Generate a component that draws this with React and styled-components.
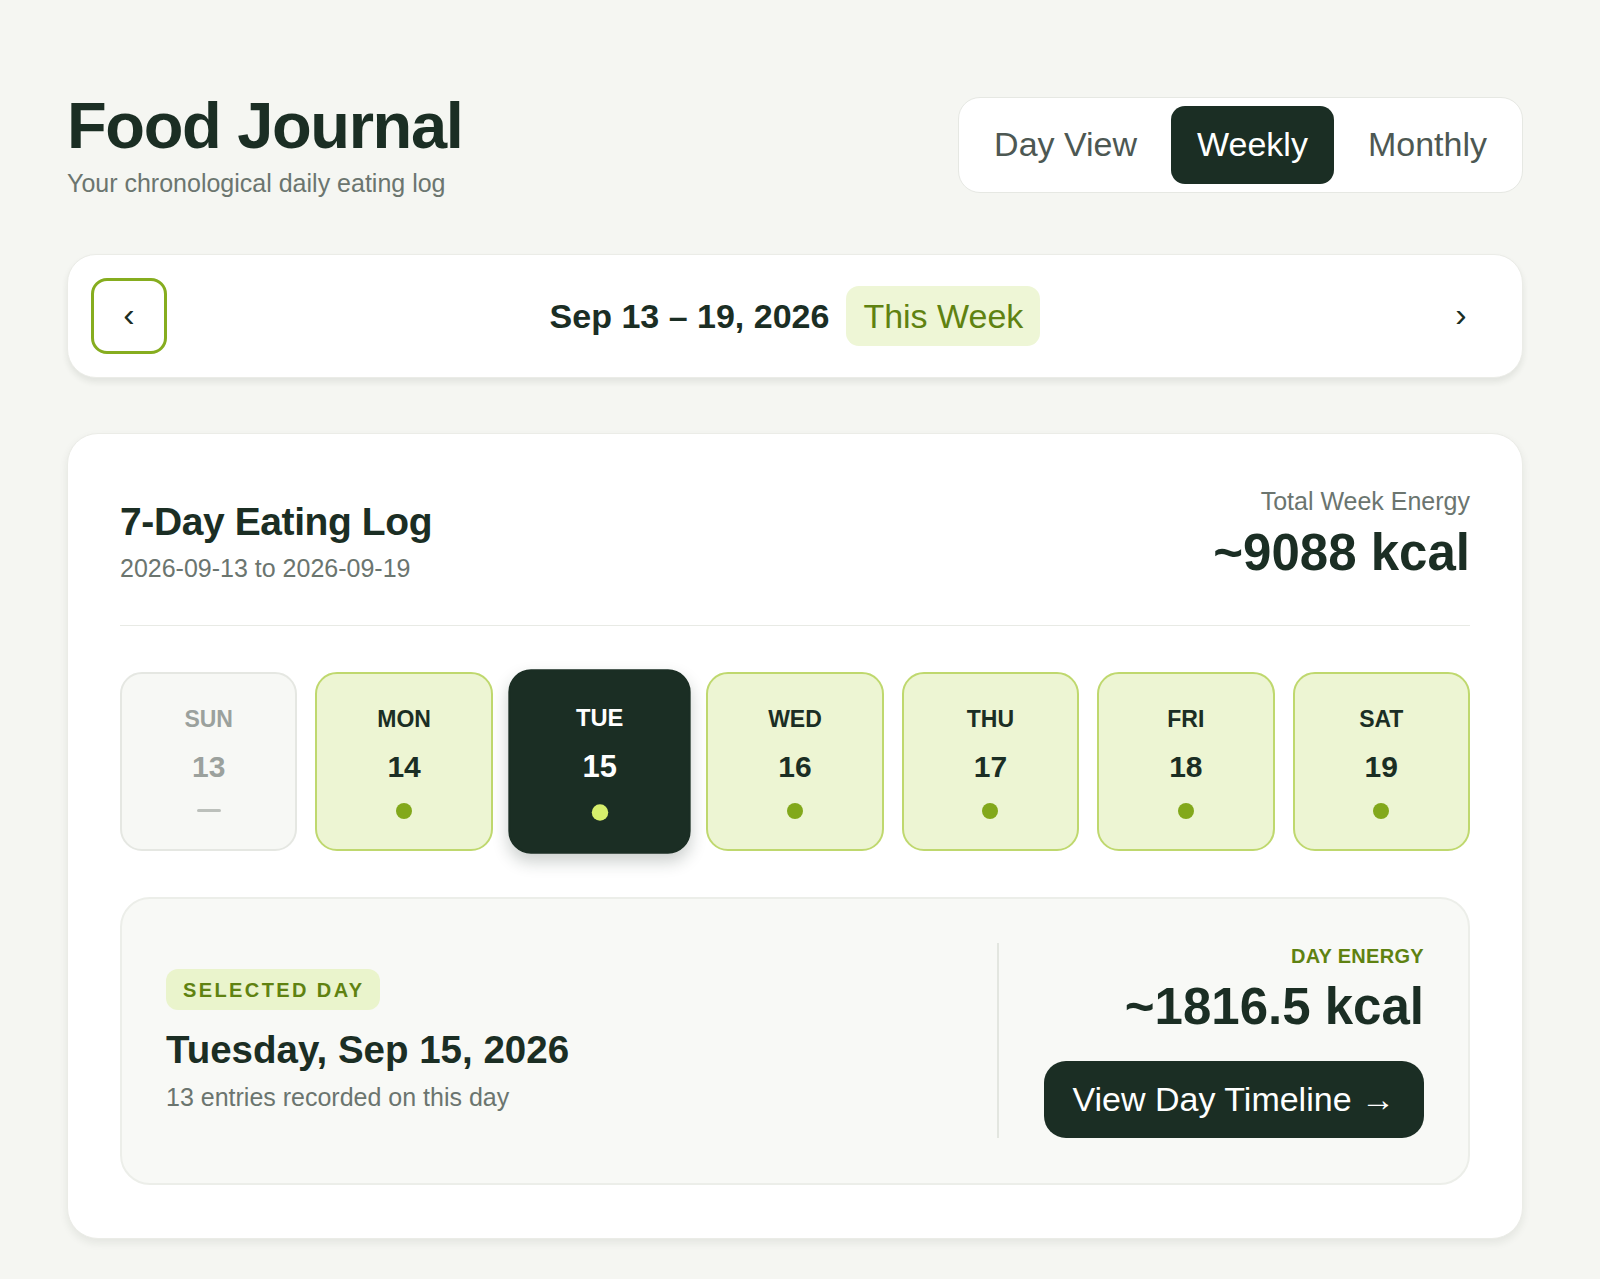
import React from 'react';
import styled, { createGlobalStyle } from 'styled-components';

const GlobalStyle = createGlobalStyle`
  body {
    margin: 0;
    background: #f5f6f2;
    font-family: "Liberation Sans", Arial, Helvetica, sans-serif;
    color: #1b2e24;
  }
  * { box-sizing: border-box; }
`;

const Page = styled.div`
  padding: 91px 77px 39px 67px;
`;

const Header = styled.header`
  display: flex;
  justify-content: space-between;
  align-items: center;
  margin-bottom: 56px;
`;

const TitleBlock = styled.div`
  display: flex;
  flex-direction: column;
`;

const Title = styled.h1`
  margin: 0;
  font-size: 65px;
  line-height: 70px;
  font-weight: 700;
  letter-spacing: -1.35px;
  color: #1b2e24;
`;

const Subtitle = styled.p`
  margin: 7px 0 0;
  font-size: 25px;
  line-height: 30px;
  color: #6b756f;
`;

const ViewSwitch = styled.div`
  display: flex;
  gap: 8px;
  padding: 8px 9px;
  background: #fff;
  border: 1.5px solid #e6e8e3;
  border-radius: 22px;
`;

const ViewButton = styled.button`
  height: 78px;
  padding: 0 26px;
  border: none;
  border-radius: 14px;
  font-family: inherit;
  font-size: 34px;
  background: ${(p) => (p.$active ? '#1b2e24' : 'transparent')};
  color: ${(p) => (p.$active ? '#ffffff' : '#4d5853')};
  cursor: pointer;
`;

const WeekNav = styled.div`
  display: flex;
  align-items: center;
  justify-content: space-between;
  padding: 23px;
  background: #fff;
  border: 1px solid #ebece7;
  border-radius: 29px;
  box-shadow: 0 4px 6px rgba(30, 40, 30, 0.09);
`;

const NavButton = styled.button`
  width: 76px;
  height: 76px;
  display: flex;
  align-items: center;
  justify-content: center;
  padding: 0 0 4px;
  border-radius: 16px;
  border: 3px solid ${(p) => (p.$focused ? '#86ad1f' : 'transparent')};
  background: #fff;
  font-family: inherit;
  font-size: 34px;
  color: #1b2e24;
  cursor: pointer;
`;

const WeekLabel = styled.div`
  display: flex;
  align-items: center;
  gap: 17px;
`;

const DateRange = styled.span`
  font-size: 34px;
  font-weight: 700;
  color: #1b2e24;
`;

const ThisWeek = styled.span`
  height: 60px;
  line-height: 60px;
  padding: 0 17px;
  border-radius: 13px;
  background: #eef6d6;
  color: #5f8211;
  font-size: 34px;
`;

const LogCard = styled.section`
  margin-top: 55px;
  padding: 53px 52px;
  background: #fff;
  border: 1px solid #ebece7;
  border-radius: 31px;
  box-shadow: 0 4px 8px rgba(30, 40, 30, 0.08);
`;

const LogHeader = styled.div`
  display: flex;
  justify-content: space-between;
  align-items: flex-end;
  padding-bottom: 42px;
  border-bottom: 1.5px solid #e8eae5;
`;

const LogTitle = styled.h2`
  margin: 0;
  font-size: 39px;
  line-height: 47px;
  font-weight: 700;
  letter-spacing: -0.4px;
  color: #1b2e24;
`;

const LogRange = styled.p`
  margin: 8px 0 0;
  font-size: 25px;
  line-height: 30px;
  color: #6b756f;
`;

const TotalBlock = styled.div`
  display: flex;
  flex-direction: column;
  align-items: flex-end;
`;

const TotalLabel = styled.span`
  font-size: 25px;
  line-height: 29px;
  color: #6b756f;
`;

const BigKcal = styled.span`
  margin-top: ${(p) => p.$gap || 7}px;
  font-size: 51px;
  line-height: 60px;
  font-weight: 700;
  color: #1b2e24;
`;

const DayGrid = styled.div`
  display: grid;
  grid-template-columns: repeat(7, 1fr);
  gap: 18px;
  margin-top: 46px;
`;

const dayStyles = {
  empty: { bg: '#f7f8f5', border: '#e5e7e2', text: '#9ba19d' },
  logged: { bg: '#edf5d3', border: '#bfd86e', text: '#1b2e24' },
  selected: { bg: '#1b2e24', border: '#1b2e24', text: '#ffffff' },
};

const DayCard = styled.button`
  height: 179px;
  display: flex;
  flex-direction: column;
  align-items: center;
  justify-content: center;
  border-radius: 22px;
  border: 2px solid ${(p) => dayStyles[p.$variant].border};
  background: ${(p) => dayStyles[p.$variant].bg};
  color: ${(p) => dayStyles[p.$variant].text};
  font-family: inherit;
  cursor: pointer;
  transform: ${(p) => (p.$variant === 'selected' ? 'scale(1.03)' : 'none')};
  box-shadow: ${(p) => (p.$variant === 'selected' ? '0 8px 16px rgba(27, 46, 36, 0.22)' : 'none')};
`;

const DayName = styled.span`
  font-size: 23px;
  line-height: 28px;
  font-weight: 700;
`;

const DayNum = styled.span`
  margin-top: 16px;
  font-size: 30px;
  line-height: 36px;
  font-weight: 700;
`;

const Marker = styled.span`
  margin-top: 18px;
  height: 16px;
  display: flex;
  align-items: center;
  justify-content: center;
`;

const Dot = styled.span`
  width: 16px;
  height: 16px;
  border-radius: 50%;
  background: ${(p) => (p.$light ? '#d6ee6c' : '#82a81b')};
`;

const Dash = styled.span`
  width: 24px;
  height: 3px;
  border-radius: 2px;
  background: #bcc0bb;
`;

const SelectedPanel = styled.div`
  margin-top: 46px;
  display: flex;
  justify-content: space-between;
  align-items: center;
  padding: 44px 44px 45px;
  background: #f8f9f6;
  border: 2px solid #eceee9;
  border-radius: 30px;
`;

const PanelInfo = styled.div`
  display: flex;
  flex-direction: column;
  align-items: flex-start;
`;

const SelectedBadge = styled.span`
  padding: 8.5px 16px 8.5px 17px;
  border-radius: 12px;
  background: #eaf4cc;
  color: #5f8211;
  font-size: 20px;
  line-height: 24px;
  font-weight: 700;
  letter-spacing: 2.4px;
`;

const DayTitle = styled.h3`
  margin: 18px 0 0;
  font-size: 38.5px;
  line-height: 44px;
  font-weight: 700;
  color: #1b2e24;
`;

const EntryCount = styled.p`
  margin: 10px 0 0;
  font-size: 25px;
  line-height: 30px;
  color: #6b756f;
`;

const PanelEnergy = styled.div`
  display: flex;
  flex-direction: column;
  align-items: flex-end;
  padding-left: 45px;
  border-left: 2px solid #e3e6e0;
`;

const EnergyLabel = styled.span`
  font-size: 20px;
  line-height: 26px;
  font-weight: 700;
  letter-spacing: 0.3px;
  color: #5f8211;
`;

const TimelineButton = styled.button`
  margin-top: 24px;
  height: 77px;
  padding: 0 29px;
  border: none;
  border-radius: 22px;
  background: #1b2e24;
  color: #fff;
  font-family: inherit;
  font-size: 34px;
  cursor: pointer;
`;

const days = [
  { name: 'SUN', num: 13, variant: 'empty' },
  { name: 'MON', num: 14, variant: 'logged' },
  { name: 'TUE', num: 15, variant: 'selected' },
  { name: 'WED', num: 16, variant: 'logged' },
  { name: 'THU', num: 17, variant: 'logged' },
  { name: 'FRI', num: 18, variant: 'logged' },
  { name: 'SAT', num: 19, variant: 'logged' },
];

const App = () => {
  const [view, setView] = React.useState('Weekly');
  const [selected, setSelected] = React.useState(15);

  return (
    <Page>
      <GlobalStyle />
      <Header>
        <TitleBlock>
          <Title>Food Journal</Title>
          <Subtitle>Your chronological daily eating log</Subtitle>
        </TitleBlock>
        <ViewSwitch>
          {['Day View', 'Weekly', 'Monthly'].map((v) => (
            <ViewButton key={v} $active={view === v} onClick={() => setView(v)}>
              {v}
            </ViewButton>
          ))}
        </ViewSwitch>
      </Header>

      <WeekNav>
        <NavButton $focused>‹</NavButton>
        <WeekLabel>
          <DateRange>Sep 13 – 19, 2026</DateRange>
          <ThisWeek>This Week</ThisWeek>
        </WeekLabel>
        <NavButton>›</NavButton>
      </WeekNav>

      <LogCard>
        <LogHeader>
          <div>
            <LogTitle>7-Day Eating Log</LogTitle>
            <LogRange>2026-09-13 to 2026-09-19</LogRange>
          </div>
          <TotalBlock>
            <TotalLabel>Total Week Energy</TotalLabel>
            <BigKcal>~9088 kcal</BigKcal>
          </TotalBlock>
        </LogHeader>

        <DayGrid>
          {days.map((d) => {
            const variant = d.variant === 'empty' ? 'empty' : d.num === selected ? 'selected' : 'logged';
            return (
              <DayCard key={d.name} $variant={variant} onClick={() => d.variant !== 'empty' && setSelected(d.num)}>
                <DayName>{d.name}</DayName>
                <DayNum>{d.num}</DayNum>
                <Marker>
                  {variant === 'empty' ? <Dash /> : <Dot $light={variant === 'selected'} />}
                </Marker>
              </DayCard>
            );
          })}
        </DayGrid>

        <SelectedPanel>
          <PanelInfo>
            <SelectedBadge>SELECTED DAY</SelectedBadge>
            <DayTitle>Tuesday, Sep 15, 2026</DayTitle>
            <EntryCount>13 entries recorded on this day</EntryCount>
          </PanelInfo>
          <PanelEnergy>
            <EnergyLabel>DAY ENERGY</EnergyLabel>
            <BigKcal $gap={8}>~1816.5 kcal</BigKcal>
            <TimelineButton>View Day Timeline →</TimelineButton>
          </PanelEnergy>
        </SelectedPanel>
      </LogCard>
    </Page>
  );
};

export default App;
